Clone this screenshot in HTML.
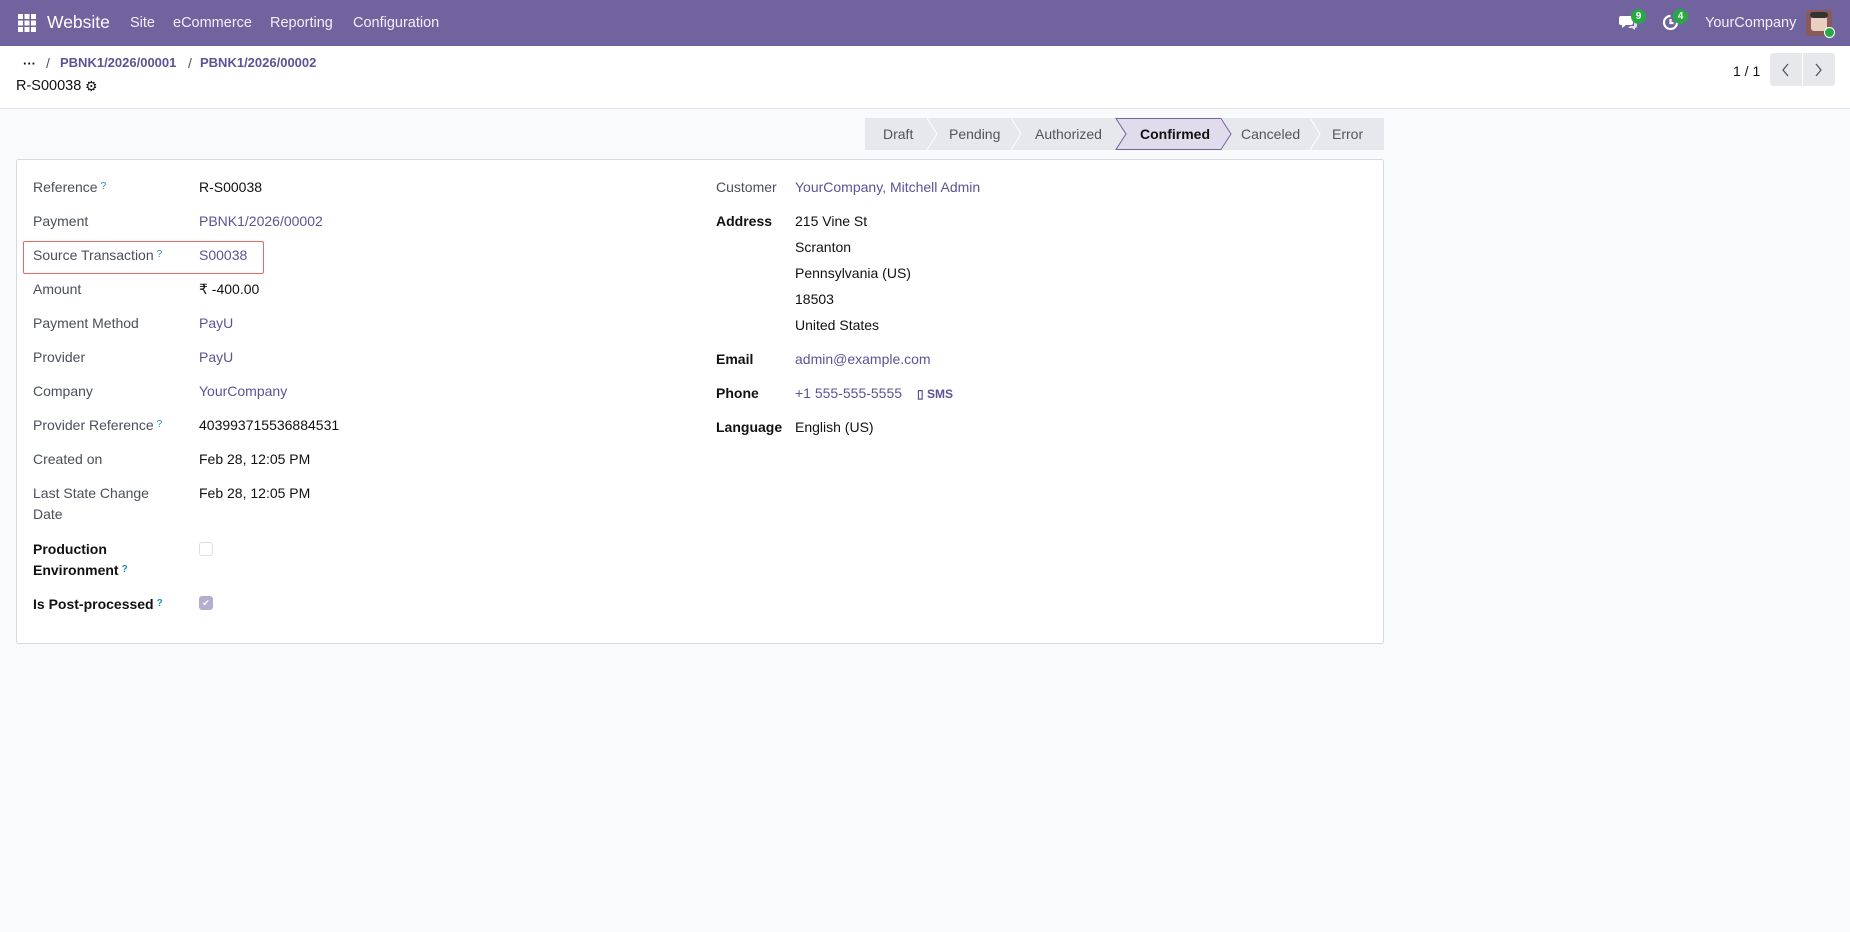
<!DOCTYPE html>
<html><head><meta charset="utf-8"><style>
*{margin:0;padding:0;box-sizing:border-box}
body{width:1850px;height:932px;background:#f9fafb;font-family:"Liberation Sans",sans-serif;font-size:14px;color:#111;position:relative;overflow:hidden}
.a{position:absolute;white-space:nowrap;line-height:18px}
.nav{position:absolute;left:0;top:0;width:1850px;height:46px;background:#71639e;color:#fff}
.nav .a{top:14px;font-size:14.5px;color:#f1eff7}
.hdr{position:absolute;left:0;top:46px;width:1850px;height:63px;background:#fff;border-bottom:1px solid #dee2e6}
.lnk{color:#5f5294}
.lbl{color:#4a4f59}
.b{font-weight:bold;color:#111}
.q{color:#1b8fb0;font-size:10px;vertical-align:top;margin-left:3px}
.card{position:absolute;left:16px;top:159px;width:1368px;height:485px;background:#fff;border:1px solid #d8dadd;border-radius:3px}
.status{position:absolute;left:865px;top:118px;width:519px;height:32px;background:#e6e8eb}
.st{position:absolute;top:8px;color:#555;font-size:14px}
.badge{position:absolute;background:#28a745;color:#fff;font-size:10px;border-radius:8px;width:15px;height:15px;text-align:center;line-height:15px;font-weight:bold}
</style></head><body>
<div class="nav">
<svg class="a" style="left:18px;top:14px" width="18" height="18" viewBox="0 0 18 18" fill="#fff"><rect x="0" y="0" width="5" height="5"/><rect x="6.5" y="0" width="5" height="5"/><rect x="13" y="0" width="5" height="5"/><rect x="0" y="6.5" width="5" height="5"/><rect x="6.5" y="6.5" width="5" height="5"/><rect x="13" y="6.5" width="5" height="5"/><rect x="0" y="13" width="5" height="5"/><rect x="6.5" y="13" width="5" height="5"/><rect x="13" y="13" width="5" height="5"/></svg>
<div class="a" style="left:47px;top:13px;font-size:17.5px;color:#fff">Website</div>
<div class="a" style="left:130px">Site</div>
<div class="a" style="left:173px">eCommerce</div>
<div class="a" style="left:270px">Reporting</div>
<div class="a" style="left:353px">Configuration</div>
<svg class="a" style="left:1619px;top:14px" width="18" height="17" viewBox="0 0 18 17" fill="#fff"><path d="M2 2h10a2 2 0 0 1 2 2v5a2 2 0 0 1-2 2H7l-4 3v-3H2a2 2 0 0 1-2-2V4a2 2 0 0 1 2-2z"/><path d="M15 6h1a2 2 0 0 1 2 2v4a2 2 0 0 1-2 2v2l-3-2H9l2-2h4z" opacity=".8"/></svg>
<div class="badge" style="left:1631px;top:9px">9</div>
<svg class="a" style="left:1662px;top:14px" width="17" height="17" viewBox="0 0 17 17" fill="none" stroke="#fff" stroke-width="2.2"><path d="M8.5 2a6.5 6.5 0 1 0 6.5 6.5"/><path d="M8.5 5v4h3"/></svg>
<div class="badge" style="left:1673px;top:9px">4</div>
<div class="a" style="left:1705px">YourCompany</div>
<div class="a" style="left:1806px;top:10px;width:26px;height:26px;background:#8a5a5a;border-radius:3px"><div style="position:absolute;left:5px;top:5px;width:16px;height:16px;background:#e9cfc0;border-radius:3px"></div><div style="position:absolute;left:4px;top:2px;width:18px;height:6px;background:#333;border-radius:3px"></div></div>
<div class="a" style="left:1824px;top:27px;width:11px;height:11px;background:#28a745;border-radius:50%;border:1px solid #fff"></div>
</div>
<div class="hdr">
<div class="a b" style="left:23px;top:9px;font-size:13px">···</div>
<div class="a lbl" style="left:46px;top:8px">/</div>
<div class="a lnk" style="left:60px;top:8px;font-weight:bold;font-size:13px">PBNK1/2026/00001</div>
<div class="a lbl" style="left:188px;top:8px">/</div>
<div class="a lnk" style="left:200px;top:8px;font-weight:bold;font-size:13px">PBNK1/2026/00002</div>
<div class="a" style="left:16px;top:31px;font-size:14.5px">R-S00038</div>
<div class="a" style="left:85px;top:31px;font-size:14px">⚙</div>
<div class="a" style="left:1733px;top:16px;font-size:14px">1 / 1</div>
<div class="a" style="left:1770px;top:7px;width:65px;height:33px;background:#e6e8eb;border-radius:3px"><div style="position:absolute;left:32px;top:0;width:1px;height:33px;background:#fff"></div></div>
<svg class="a" style="left:1780px;top:16px" width="12" height="16" viewBox="0 0 12 16" fill="none" stroke="#555" stroke-width="1.3"><path d="M8 2L3 8l5 6"/></svg>
<svg class="a" style="left:1812px;top:16px" width="12" height="16" viewBox="0 0 12 16" fill="none" stroke="#555" stroke-width="1.3"><path d="M4 2l5 6-5 6"/></svg>
</div>
<div class="status">
<svg style="position:absolute;left:0;top:0" width="519" height="32"><g fill="none" stroke="#fff" stroke-width="1"><path d="M62 0l10 16-10 16"/><path d="M146 0l10 16-10 16"/><path d="M356 0l10 16-10 16"/><path d="M445 0l10 16-10 16"/></g><path d="M251 0.5h105l10 15.5-10 15.5h-105l10-15.5z" fill="#e0dcec" stroke="#71639e" stroke-width="1"/></svg>
<div class="st" style="left:18px">Draft</div>
<div class="st" style="left:84px">Pending</div>
<div class="st" style="left:170px">Authorized</div>
<div class="st" style="left:275px;color:#111;font-weight:bold">Confirmed</div>
<div class="st" style="left:376px">Canceled</div>
<div class="st" style="left:467px">Error</div>
</div>
<div class="card"></div>
<div class="a" style="left:23px;top:241px;width:241px;height:33px;border:1.5px solid #e66;border-radius:2px"></div>
<div class="a lbl" style="left:33px;top:178px">Reference<span class="q">?</span></div><div class="a" style="left:199px;top:178px">R-S00038</div>
<div class="a lbl" style="left:33px;top:212px">Payment</div><div class="a lnk" style="left:199px;top:212px">PBNK1/2026/00002</div>
<div class="a lbl" style="left:33px;top:246px">Source Transaction<span class="q">?</span></div><div class="a lnk" style="left:199px;top:246px">S00038</div>
<div class="a lbl" style="left:33px;top:280px">Amount</div><div class="a" style="left:199px;top:280px">₹ -400.00</div>
<div class="a lbl" style="left:33px;top:314px">Payment Method</div><div class="a lnk" style="left:199px;top:314px">PayU</div>
<div class="a lbl" style="left:33px;top:348px">Provider</div><div class="a lnk" style="left:199px;top:348px">PayU</div>
<div class="a lbl" style="left:33px;top:382px">Company</div><div class="a lnk" style="left:199px;top:382px">YourCompany</div>
<div class="a lbl" style="left:33px;top:416px">Provider Reference<span class="q">?</span></div><div class="a" style="left:199px;top:416px">403993715536884531</div>
<div class="a lbl" style="left:33px;top:450px">Created on</div><div class="a" style="left:199px;top:450px">Feb 28, 12:05 PM</div>
<div class="a lbl" style="left:33px;top:484px">Last State Change</div><div class="a lbl" style="left:33px;top:505px">Date</div><div class="a" style="left:199px;top:484px">Feb 28, 12:05 PM</div>
<div class="a b" style="left:33px;top:540px">Production</div><div class="a b" style="left:33px;top:561px">Environment<span class="q">?</span></div>
<div class="a" style="left:199px;top:542px;width:14px;height:14px;border:1px solid #ddd;border-radius:3px;background:#fff"></div>
<div class="a b" style="left:33px;top:595px">Is Post-processed<span class="q">?</span></div>
<div class="a" style="left:199px;top:596px;width:14px;height:14px;border-radius:3px;background:#b6aecf;color:#fff;font-size:9px;text-align:center;line-height:14px">✔</div>
<div class="a lbl" style="left:716px;top:178px">Customer</div><div class="a lnk" style="left:795px;top:178px">YourCompany, Mitchell Admin</div>
<div class="a b" style="left:716px;top:212px">Address</div>
<div class="a" style="left:795px;top:212px">215 Vine St</div>
<div class="a" style="left:795px;top:238px">Scranton</div>
<div class="a" style="left:795px;top:264px">Pennsylvania (US)</div>
<div class="a" style="left:795px;top:290px">18503</div>
<div class="a" style="left:795px;top:316px">United States</div>
<div class="a b" style="left:716px;top:350px">Email</div><div class="a lnk" style="left:795px;top:350px">admin@example.com</div>
<div class="a b" style="left:716px;top:384px">Phone</div><div class="a lnk" style="left:795px;top:384px">+1 555-555-5555</div>
<div class="a lnk" style="left:917px;top:385px;font-size:12px;font-weight:bold">▯ SMS</div>
<div class="a b" style="left:716px;top:418px">Language</div><div class="a" style="left:795px;top:418px">English (US)</div>
</body></html>
